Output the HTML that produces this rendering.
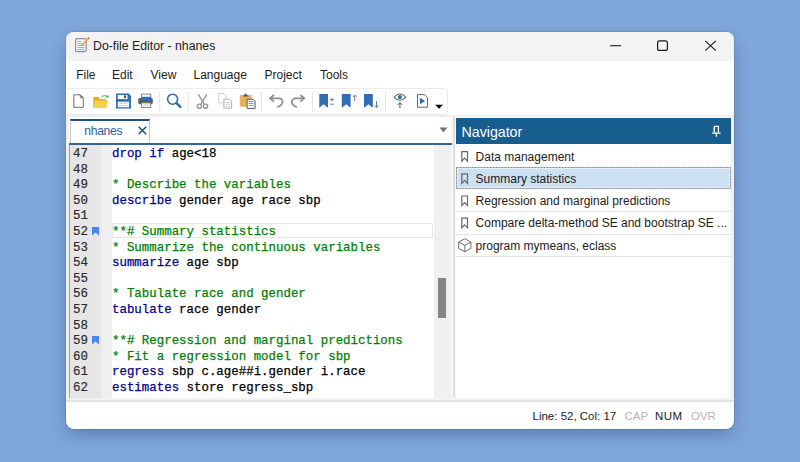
<!DOCTYPE html>
<html><head><meta charset="utf-8">
<style>
*{margin:0;padding:0;box-sizing:border-box}
html,body{width:800px;height:462px;overflow:hidden;background:#7fa7d9;font-family:"Liberation Sans",sans-serif;position:relative}
.a{position:absolute}
.win{left:66px;top:32px;width:668px;height:397px;border-radius:8px;background:#fff;box-shadow:0 7px 18px -3px rgba(20,40,80,0.38),0 0 0 1px rgba(60,80,110,0.16)}
.ui{position:absolute;font-size:12px;line-height:14px;color:#1b1b1b;white-space:nowrap}
.ln{position:absolute;left:73px;font-family:"Liberation Mono",monospace;font-size:12.43px;line-height:15.6px;color:#2b2b2b;white-space:pre;-webkit-text-stroke:0.2px currentColor}
.cd{position:absolute;left:112px;font-family:"Liberation Mono",monospace;font-size:12.43px;line-height:15.6px;color:#000;white-space:pre;-webkit-text-stroke:0.25px currentColor}
.k{color:#00008b}
.c{color:#008000}
.nv{position:absolute;left:475.6px;font-size:12px;line-height:14px;color:#1b1b1b;white-space:nowrap}
.sep{position:absolute;width:1px;background:#e0e0e0}
</style></head><body>
<div class="a win"></div>
<!-- title bar -->
<div class="a" style="left:66px;top:32px;width:668px;height:29px;background:#f3f3f3;border-radius:8px 8px 0 0"></div>
<div class="ui" style="left:93px;top:39px;font-size:12.3px">Do-file Editor - nhanes</div>
<!-- menu -->
<div class="ui" style="left:76.2px;top:68px;">File</div>
<div class="ui" style="left:112px;top:68px;">Edit</div>
<div class="ui" style="left:150.5px;top:68px;">View</div>
<div class="ui" style="left:193.5px;top:68px;">Language</div>
<div class="ui" style="left:264.5px;top:68px;">Project</div>
<div class="ui" style="left:320px;top:68px;">Tools</div>
<!-- toolbar box -->
<div class="a" style="left:67px;top:88px;width:381px;height:27px;border:1px solid #ebebeb;border-left:none;border-radius:0 3px 3px 0"></div>
<!-- grey band below toolbar -->
<div class="a" style="left:66px;top:115px;width:668px;height:2px;background:#f0f0f0"></div>
<!-- left frame strip -->
<div class="a" style="left:66px;top:115px;width:3px;height:287px;background:#f0f0f0"></div>
<!-- splitter -->
<div class="a" style="left:451px;top:117px;width:4.5px;height:283px;background:#f6f6f6"></div>
<div class="a" style="left:453px;top:117px;width:1.5px;height:283px;background:#dfdfdf"></div>
<!-- right frame strip -->
<div class="a" style="left:731px;top:115px;width:3px;height:287px;background:#f0f0f0"></div>
<!-- bottom band -->
<div class="a" style="left:66px;top:398px;width:668px;height:4px;background:#f3f3f3"></div>
<div class="a" style="left:66px;top:399.5px;width:668px;height:2px;background:#e2e2e2"></div>

<!-- tab -->
<div class="a" style="left:70px;top:119px;width:80px;height:25px;border:1px solid #c8c8c8;border-top:2px solid #1d4e84;border-bottom:none;background:#fff"></div>
<div class="ui" style="left:84.3px;top:124.1px;font-size:12.2px;letter-spacing:-0.35px;color:#2d5f9a">nhanes</div>
<div class="a" style="left:69px;top:142.7px;width:383px;height:2px;background:#35638f"></div>

<!-- editor -->
<div class="a" style="left:69px;top:145px;width:1px;height:253px;background:#a0a0a0"></div>
<div class="a" style="left:70px;top:145px;width:31px;height:253px;background:#e6e6e6"></div>
<div class="a" style="left:101px;top:145px;width:11px;height:253px;background:#efefef"></div>
<!-- current line box -->
<div class="a" style="left:112px;top:223px;width:321px;height:15px;border:1px solid #e6e6e6"></div>
<!-- scrollbar -->
<div class="a" style="left:434px;top:145px;width:17px;height:253.5px;background:#f0f0f0"></div>
<div class="a" style="left:438.2px;top:278px;width:8px;height:40px;background:#858585"></div>
<!-- bookmarks in margin -->
<svg class="a" style="left:92px;top:227px" width="7" height="9" viewBox="0 0 7 9"><path d="M0 0H7V8.5L3.5 5.5L0 8.5Z" fill="#4a86f0"/></svg>
<svg class="a" style="left:92px;top:336px" width="7" height="9" viewBox="0 0 7 9"><path d="M0 0H7V8.5L3.5 5.5L0 8.5Z" fill="#4a86f0"/></svg>
<div class="ln" style="top:147.00px">47</div>
<div class="cd" style="top:147.00px"><span class="k">drop</span> <span class="k">if</span> age&lt;18</div>
<div class="ln" style="top:162.60px">48</div>
<div class="ln" style="top:178.20px">49</div>
<div class="cd" style="top:178.20px"><span class="c">* Describe the variables</span></div>
<div class="ln" style="top:193.80px">50</div>
<div class="cd" style="top:193.80px"><span class="k">describe</span> gender age race sbp</div>
<div class="ln" style="top:209.40px">51</div>
<div class="ln" style="top:225.00px">52</div>
<div class="cd" style="top:225.00px"><span class="c">**# Summary statistics</span></div>
<div class="ln" style="top:240.60px">53</div>
<div class="cd" style="top:240.60px"><span class="c">* Summarize the continuous variables</span></div>
<div class="ln" style="top:256.20px">54</div>
<div class="cd" style="top:256.20px"><span class="k">summarize</span> age sbp</div>
<div class="ln" style="top:271.80px">55</div>
<div class="ln" style="top:287.40px">56</div>
<div class="cd" style="top:287.40px"><span class="c">* Tabulate race and gender</span></div>
<div class="ln" style="top:303.00px">57</div>
<div class="cd" style="top:303.00px"><span class="k">tabulate</span> race gender</div>
<div class="ln" style="top:318.60px">58</div>
<div class="ln" style="top:334.20px">59</div>
<div class="cd" style="top:334.20px"><span class="c">**# Regression and marginal predictions</span></div>
<div class="ln" style="top:349.80px">60</div>
<div class="cd" style="top:349.80px"><span class="c">* Fit a regression model for sbp</span></div>
<div class="ln" style="top:365.40px">61</div>
<div class="cd" style="top:365.40px"><span class="k">regress</span> sbp c.age##i.gender i.race</div>
<div class="ln" style="top:381.00px">62</div>
<div class="cd" style="top:381.00px"><span class="k">estimates</span> store regress_sbp</div>

<!-- navigator -->
<div class="a" style="left:455.5px;top:117.5px;width:275px;height:26px;background:#175d8d"></div>
<div class="ui" style="left:461.5px;top:123.5px;font-size:14.2px;line-height:16px;color:#fff">Navigator</div>
<!-- selected row -->
<div class="a" style="left:456px;top:167px;width:275px;height:22px;background:#cde0f1"></div>
<svg class="a" style="left:456px;top:167px" width="275" height="22"><rect x="0.5" y="0.5" width="274" height="21" fill="none" stroke="#8a8a8a" stroke-width="1" stroke-dasharray="2 1"/><rect x="1.5" y="1.5" width="272" height="19" fill="none" stroke="#e4f0fa" stroke-width="1"/></svg>
<div class="a" style="left:456px;top:211px;width:275px;height:1px;background:#e3e3e3"></div>
<div class="a" style="left:456px;top:233.5px;width:275px;height:1px;background:#e3e3e3"></div>
<div class="a" style="left:456px;top:255.5px;width:275px;height:1px;background:#e3e3e3"></div>
<div class="nv" style="top:149.7px">Data management</div>
<div class="nv" style="top:171.9px">Summary statistics</div>
<div class="nv" style="top:194.1px">Regression and marginal predictions</div>
<div class="nv" style="top:216.3px">Compare delta-method SE and bootstrap SE ...</div>
<div class="nv" style="top:238.5px">program mymeans, eclass</div>

<!-- status -->
<div class="ui" style="left:532.5px;top:409px;font-size:11.5px">Line: 52, Col: 17</div>
<div class="ui" style="left:624.5px;top:409px;font-size:11.5px;color:#b4b4b4">CAP</div>
<div class="ui" style="left:655px;top:409px;font-size:11.5px;letter-spacing:0.45px">NUM</div>
<div class="ui" style="left:691px;top:409px;font-size:11.5px;color:#b4b4b4">OVR</div>
<svg class="a" style="left:0;top:0" width="800" height="462" viewBox="0 0 800 462">
<!-- app icon -->
<rect x="75.6" y="38.7" width="10.6" height="12.9" rx="1.6" fill="#fff" stroke="#8c8c8c" stroke-width="1.2"/>
<path d="M77.4 41.3H81.2M77.4 43.4H81.6M77.4 45.5H84.5M77.4 47.6H84.5M77.4 49.7H84.5" stroke="#6d9ad6" stroke-width="0.9"/>
<path d="M82.2 44.6L88 38.8" stroke="#f2a93b" stroke-width="1.9" stroke-linecap="round"/>
<circle cx="88.6" cy="38.1" r="0.9" fill="#e5484d"/>
<!-- window controls -->
<path d="M610.2 45.7H621.1" stroke="#1b1b1b" stroke-width="1.1"/>
<rect x="657.6" y="40.8" width="9.8" height="9.6" rx="2" fill="none" stroke="#1b1b1b" stroke-width="1.2"/>
<path d="M705.3 40.8L715.8 50.6M715.8 40.8L705.3 50.6" stroke="#1b1b1b" stroke-width="1.1"/>
<!-- toolbar separators -->
<path d="M159.75 92V111.5M188.3 92V111.5M261.4 92V111.5M312.6 92V111.5M385.6 92V111.5" stroke="#e2e2e2" stroke-width="1"/>
<!-- new -->
<path d="M73.8 94.8H80.3L83.3 97.8V107.3H73.8Z" fill="#fff" stroke="#6e6e6e" stroke-width="1" stroke-linejoin="round"/>
<path d="M80.3 94.8V97.8H83.3" fill="none" stroke="#6e6e6e" stroke-width="0.9"/><circle cx="81.6" cy="96.5" r="0.7" fill="#555"/>
<!-- folder -->
<path d="M93.3 97.1H98.6L100.1 99.1H106.1V108H93.3Z" fill="#e3b021"/>
<path d="M95 100.4H108.4L106.1 108H93.3Z" fill="#f3cf4b"/>
<path d="M101.3 97.4Q103.8 94.6 107 96.4" stroke="#72c06c" stroke-width="1.3" fill="none"/>
<path d="M108.7 94.7L108.5 98.1L105.5 97.2Z" fill="#5ab856"/>
<!-- save -->
<path d="M116 93.5H128.6L131 95.9V108.6H116Z" fill="#2f6db5"/>
<rect x="117.7" y="95" width="9.8" height="4.1" fill="#fff"/>
<rect x="124.1" y="95.4" width="1.8" height="2.6" fill="#3a3a3a"/>
<rect x="117.8" y="101.7" width="11.3" height="5.5" fill="#fff"/>
<path d="M119.3 103.3H127.6M119.3 105.5H127.6" stroke="#c8b8a8" stroke-width="0.7"/>
<!-- print -->
<rect x="138.3" y="98" width="14.5" height="6.2" rx="1.6" fill="#5c5c5c"/>
<rect x="141.6" y="94.1" width="9.2" height="3.6" fill="#fff" stroke="#7a7a7a" stroke-width="0.9"/>
<rect x="141.2" y="96.8" width="9.8" height="3.8" fill="#2f6db5"/>
<rect x="141.6" y="102.9" width="9.2" height="4.6" fill="#fff" stroke="#7a7a7a" stroke-width="0.9"/>
<path d="M143 105H149.5" stroke="#aaa" stroke-width="0.7"/>
<!-- search -->
<circle cx="172.6" cy="99.2" r="5" fill="none" stroke="#2a6ab5" stroke-width="1.6"/>
<path d="M176.4 103L180.3 106.9" stroke="#2a6ab5" stroke-width="2.4" stroke-linecap="round"/>
<!-- scissors -->
<path d="M198.3 94.3L204.3 104.2M206.8 94.3L200.8 104.2" stroke="#929292" stroke-width="1.35"/>
<circle cx="199.4" cy="106.2" r="2.1" fill="none" stroke="#929292" stroke-width="1.35"/>
<circle cx="205.6" cy="106.2" r="2.1" fill="none" stroke="#929292" stroke-width="1.35"/>
<!-- copy (disabled) -->
<path d="M218.6 93.6H224L226 95.6V102.9H218.6Z" fill="#fff" stroke="#d0d0d0" stroke-width="0.9"/>
<path d="M223.9 99.1H229.6L231.6 101.1V108.2H223.9Z" fill="#fff" stroke="#a9a9a9" stroke-width="0.9"/>
<path d="M225.4 102.5H230M225.4 104.4H230M225.4 106.3H230" stroke="#bdbdbd" stroke-width="0.7"/>
<!-- paste -->
<rect x="239.8" y="94.9" width="11.9" height="11.9" rx="0.5" fill="#eab15a"/>
<path d="M242.8 96.4L245.7 93.3L248.6 96.4Z" fill="#555"/>
<path d="M247.1 99.2H253.1L255.1 101.2V108.4H247.1Z" fill="#fff" stroke="#5a5a5a" stroke-width="1"/>
<path d="M248.6 101.5H253.4M248.6 103.5H253.4M248.6 105.5H253.4" stroke="#4a86c8" stroke-width="0.8"/>
<!-- undo/redo -->
<path d="M269.8 98.3H278.6C283.6 98.3 284.6 104.6 277.4 107.1" stroke="#8c8c8c" stroke-width="1.7" fill="none"/>
<path d="M273.9 95L270.1 98.3L273.9 101.6" stroke="#8c8c8c" stroke-width="1.7" fill="none"/>
<path d="M304.5 98.3H295.7C290.7 98.3 289.7 104.6 296.9 107.1" stroke="#8c8c8c" stroke-width="1.7" fill="none"/>
<path d="M300.4 95L304.2 98.3L300.4 101.6" stroke="#8c8c8c" stroke-width="1.7" fill="none"/>
<!-- bookmarks -->
<path d="M319.3 94.1H328V107.7L323.65 104.2L319.3 107.7Z" fill="#2f6db5"/>
<path d="M332 97.8V101.4M330.1 99.6H333.9M330.1 104.2H333.9" stroke="#7a7a7a" stroke-width="1"/>
<path d="M341.8 94.1H350.6V107.7L346.2 104.2L341.8 107.7Z" fill="#2f6db5"/>
<path d="M354.7 95.2V100.8M352.7 97.1L354.7 95L356.7 97.1" stroke="#7a7a7a" stroke-width="1" fill="none"/>
<path d="M364 94.1H372.8V107.7L368.4 104.2L364 107.7Z" fill="#2f6db5"/>
<path d="M376.5 101V107.4M374.5 105.5L376.5 107.6L378.5 105.5" stroke="#7a7a7a" stroke-width="1" fill="none"/>
<!-- eye -->
<path d="M394 97.1Q399.9 90.9 405.8 97.1Q399.9 103.3 394 97.1Z" fill="#fff" stroke="#6a6a6a" stroke-width="1.1"/>
<circle cx="399.9" cy="97.1" r="2.1" fill="#2f6db5"/>
<path d="M399.9 102.6V108.2M397.7 104.9L399.9 102.6L402.1 104.9" stroke="#555" stroke-width="1" fill="none"/>
<!-- run do-file -->
<path d="M417.5 94.6H424.6L427.5 97.5V107.2H417.5Z" fill="#fff" stroke="#666" stroke-width="1" stroke-linejoin="round"/>
<path d="M419.9 97.8L425.1 101L419.9 104.3Z" fill="#2f6db5"/>
<path d="M435.2 104.7H443L439.1 108.7Z" fill="#000"/>
<!-- tab close and dropdown -->
<path d="M138.6 126.8L146.2 134.2M146.2 126.8L138.6 134.2" stroke="#1c4f86" stroke-width="1.5"/>
<path d="M439.5 127.6H447.5L443.5 132.2Z" fill="#707070"/>
<!-- pin -->
<path d="M714.3 126.3H718.4V132.6" stroke="#fff" stroke-width="1.3" fill="none"/>
<path d="M714.3 126.3V132.6" stroke="#fff" stroke-width="1.5"/>
<path d="M712.2 133.1H720.6M716.4 133.1V136.8" stroke="#fff" stroke-width="1.4"/>
<!-- navigator icons -->
<path d="M461.8 151.6H467.5V161.2L464.65 158.2L461.8 161.2Z" fill="none" stroke="#666" stroke-width="1.2"/>
<path d="M461.8 173.8H467.5V183.4L464.65 180.4L461.8 183.4Z" fill="none" stroke="#666" stroke-width="1.2"/>
<path d="M461.8 196H467.5V205.6L464.65 202.6L461.8 205.6Z" fill="none" stroke="#666" stroke-width="1.2"/>
<path d="M461.8 218.2H467.5V227.8L464.65 224.8L461.8 227.8Z" fill="none" stroke="#666" stroke-width="1.2"/>
<path d="M464.8 238.7L470.9 242.1V248.4L464.8 251.8L458.7 248.4V242.1Z M458.7 242.1L464.8 245.3L470.9 242.1M464.8 245.3V251.8" fill="none" stroke="#6a6a6a" stroke-width="1" stroke-linejoin="round"/>
</svg>

</body></html>
